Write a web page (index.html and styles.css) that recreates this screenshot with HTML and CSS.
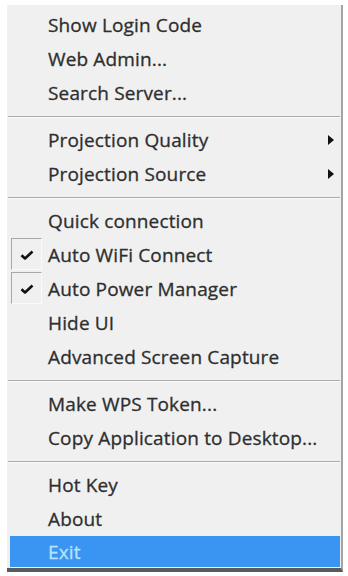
FILE: index.html
```html
<!DOCTYPE html>
<html>
<head>
<meta charset="utf-8">
<link rel="stylesheet" href="styles.css">
</head>
<body>
<div class="menu">
  <div class="item">Show Login Code</div>
  <div class="item">Web Admin...</div>
  <div class="item">Search Server...</div>
  <div class="sep"></div>
  <div class="item">Projection Quality<span class="arrow"></span></div>
  <div class="item">Projection Source<span class="arrow"></span></div>
  <div class="sep"></div>
  <div class="item">Quick connection</div>
  <div class="item checked"><span class="check"><svg width="14" height="10" viewBox="0 0 14 10"><path d="M1.5 5.2 L5 8.5 L12.5 1.5" fill="none" stroke="#111" stroke-width="2.6" stroke-linejoin="round"/></svg></span>Auto WiFi Connect</div>
  <div class="item checked"><span class="check"><svg width="14" height="10" viewBox="0 0 14 10"><path d="M1.5 5.2 L5 8.5 L12.5 1.5" fill="none" stroke="#111" stroke-width="2.6" stroke-linejoin="round"/></svg></span>Auto Power Manager</div>
  <div class="item">Hide UI</div>
  <div class="item">Advanced Screen Capture</div>
  <div class="sep"></div>
  <div class="item">Make WPS Token...</div>
  <div class="item">Copy Application to Desktop...</div>
  <div class="sep"></div>
  <div class="item">Hot Key</div>
  <div class="item">About</div>
  <div class="item active">Exit</div>
</div>
</body>
</html>
```
FILE: styles.css
```css
html, body {
  margin: 0;
  padding: 0;
  background: #ffffff;
}
.menu {
  margin: 5px 0 0 7px;
  width: 336px;
  height: 567px;
  box-sizing: border-box;
  padding: 3px 0 0 0;
  background: #f0f0f0;
  border-right: 2px solid #a4a4a4;
  border-bottom: 4px solid #5a5a5a;
  display: flex;
  flex-direction: column;
  font-family: "Open Sans", "Noto Sans", sans-serif;
  font-size: 19px;
  letter-spacing: 0.15px;
  color: #2e2e2e;
  -webkit-text-stroke: 0.3px currentColor;
}
.item {
  position: relative;
  height: 34px;
  display: flex;
  align-items: center;
  padding-left: 41px;
  flex: none;
  white-space: nowrap;
}
.sep {
  height: 13px;
  flex: none;
  display: flex;
  align-items: center;
  padding: 0 1px;
}
.sep::before {
  content: "";
  display: block;
  width: 100%;
  height: 1px;
  background: #a9a9a9;
  border-bottom: 1px solid #fbfbfb;
}
.arrow {
  position: absolute;
  right: 7px;
  top: 12px;
  width: 0;
  height: 0;
  border-top: 5px solid transparent;
  border-bottom: 5px solid transparent;
  border-left: 6px solid #111;
}
.check {
  position: absolute;
  left: 4px;
  top: 0;
  width: 31px;
  height: 32px;
  box-sizing: border-box;
  border-left: 1px solid #a8a8a8;
  border-top: 1px solid #a8a8a8;
  border-right: 1px solid #fafafa;
  border-bottom: 1px solid #fafafa;
  display: flex;
  align-items: center;
  justify-content: center;
  padding-top: 2px;
}
.active {
  height: 31px;
  margin: 0 1px 0 3px;
  padding-left: 38px;
  background: #3a95f2;
  color: #b9e2fb;
}
```
